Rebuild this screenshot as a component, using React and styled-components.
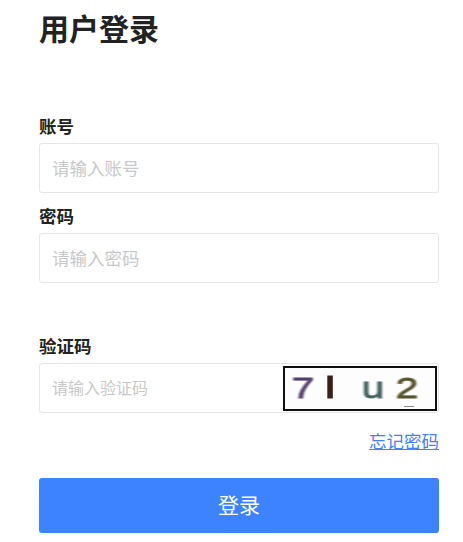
import styled, { createGlobalStyle } from "styled-components";

const GlobalStyle = createGlobalStyle`
  * {
    box-sizing: border-box;
  }
  body {
    margin: 0;
    background: #fff;
    font-family: "Noto Sans CJK SC", "Liberation Sans", sans-serif;
    color: #222;
  }
`;

const Page = styled.form`
  width: 463px;
  height: 542px;
  padding: 5px 24px 0 39px;
  overflow: hidden;
`;

const Title = styled.h1`
  margin: 0 0 64px;
  font-size: 30px;
  line-height: 44px;
  font-weight: 700;
  color: #222;
`;

const Field = styled.div`
  margin-bottom: ${(props) => props.$gap || 0}px;
`;

const Label = styled.label`
  display: block;
  height: 26px;
  font-size: 17.5px;
  line-height: 26px;
  font-weight: 700;
  margin-bottom: 4px;
  color: #222;
`;

const InputBox = styled.div`
  display: flex;
  align-items: center;
  justify-content: space-between;
  height: 50px;
  border: 1px solid #e6e6e6;
  border-radius: 3px;
  background: #fff;
`;

const Input = styled.input`
  flex: 1;
  min-width: 0;
  height: 100%;
  padding: 0 13px 2px 12px;
  border: 0;
  outline: none;
  background: transparent;
  font-family: inherit;
  font-size: ${(props) => props.$size || 17.5}px;

  &::placeholder {
    color: #c8c8c8;
    opacity: 1;
  }
`;

const Captcha = styled.div`
  display: flex;
  align-items: center;
  flex: none;
  position: relative;
  width: 154px;
  height: 45px;
  margin-right: 1px;
  border: 2px solid #111;
  background: #fdfdfd;
  font-family: "Liberation Sans", sans-serif;
  font-size: 30px;
  line-height: 1;
  overflow: hidden;
`;

const CaptchaChar = styled.span`
  flex: none;
  width: ${(props) => props.$w}px;
  margin-left: ${(props) => props.$ml || 0}px;
  text-align: center;
  color: ${(props) => props.$color};
  font-weight: ${(props) => props.$weight || 400};
  filter: blur(0.6px);
  transform: scaleX(${(props) => props.$sx || 1.35});
  -webkit-text-stroke: 0.8px ${(props) => props.$color};
`;

const Speck = styled.span`
  position: absolute;
  right: 21px;
  bottom: 2px;
  width: 10px;
  height: 1px;
  background: #8a8a90;
`;

const LinkRow = styled.div`
  display: flex;
  justify-content: flex-end;
  margin: 15px 0 24px;
`;

const ForgotLink = styled.a`
  font-size: 17.5px;
  line-height: 26px;
  color: #3f82ff;
  text-decoration: underline;
`;

const Submit = styled.button`
  display: block;
  width: 100%;
  height: 55px;
  padding: 0 0 4px;
  border: 0;
  border-radius: 3px;
  background: #3d82ff;
  color: #fff;
  font-family: inherit;
  font-size: 21px;
`;

export default function App() {
  return (
    <>
      <GlobalStyle />
      <Page onSubmit={(event) => event.preventDefault()}>
        <Title>用户登录</Title>
        <Field $gap={10}>
          <Label>账号</Label>
          <InputBox>
            <Input placeholder="请输入账号" />
          </InputBox>
        </Field>
        <Field $gap={50}>
          <Label>密码</Label>
          <InputBox>
            <Input type="password" placeholder="请输入密码" />
          </InputBox>
        </Field>
        <Field>
          <Label>验证码</Label>
          <InputBox>
            <Input $size={16} placeholder="请输入验证码" />
            <Captcha>
              <CaptchaChar $w={36} $color="#55406f">7</CaptchaChar>
              <CaptchaChar $w={18} $color="#3c1f1c" $weight={700} $sx={1.1}>l</CaptchaChar>
              <CaptchaChar $w={44} $ml={12} $color="#46625f">u</CaptchaChar>
              <CaptchaChar $w={24} $color="#56542a">2</CaptchaChar>
              <Speck />
            </Captcha>
          </InputBox>
        </Field>
        <LinkRow>
          <ForgotLink href="#">忘记密码</ForgotLink>
        </LinkRow>
        <Submit type="submit">登录</Submit>
      </Page>
    </>
  );
}
